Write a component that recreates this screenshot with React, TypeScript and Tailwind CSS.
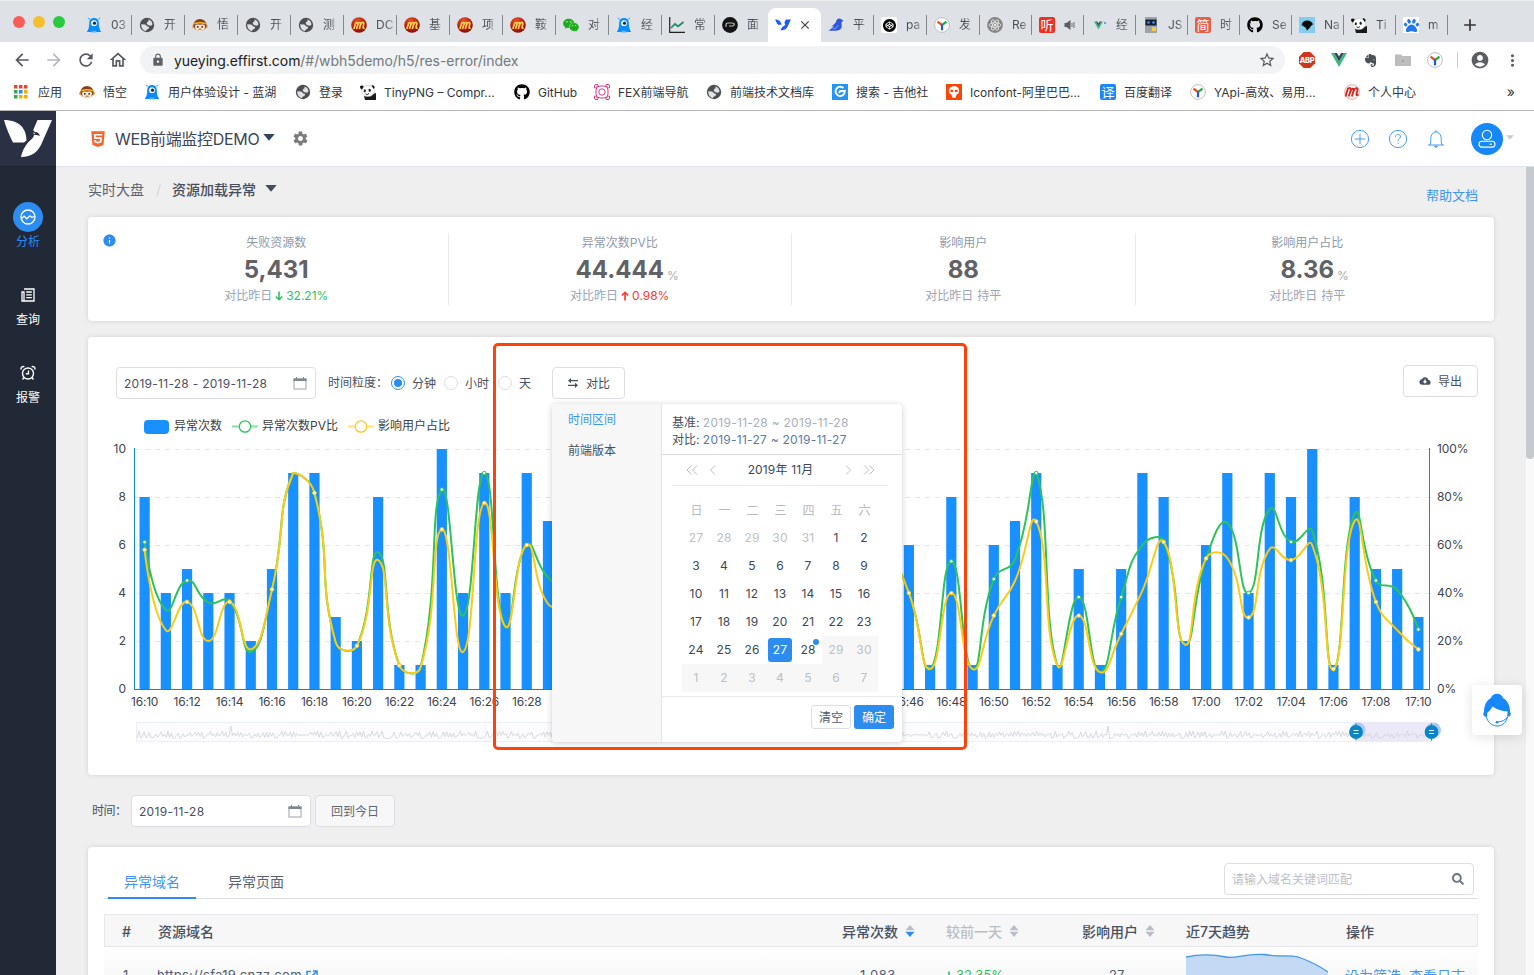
import React from "react";
import {
  MdArrowBack, MdArrowForward, MdRefresh, MdOutlineHome, MdLock, MdStarOutline,
  MdAccountCircle, MdMoreVert, MdAdd, MdClose,
} from "react-icons/md";
import { FaGithub, FaHtml5, FaEvernote, FaSearch, FaPaw } from "react-icons/fa";
import { AiFillWechat } from "react-icons/ai";
import { SiCodepen } from "react-icons/si";
import { IoMdSettings, IoMdCloudDownload, IoMdInformationCircle } from "react-icons/io";

type IconProps = { className?: string };

/* ---------- favicons ---------- */

const Globe = () => (
  <svg viewBox="0 0 16 16" className="size-4">
    <circle cx="8" cy="8" r="7.200" fill="#4d4f53" />
    <path d="M9.200 2.300L12.300 4l1.300 3.200-1.400 1.500-2.700-.4L7.800 7 8 5.200 9.800 4z" fill="#dfe1e4" />
    <path d="M2.200 7.300l4 .3 2.300 1.900 1.600.3-.5 2-2 .9-.8 1.500C4.300 13.500 2 11 2.200 7.300z" fill="#dfe1e4" />
  </svg>
);

const Lanhu = () => (
  <svg viewBox="0 0 16 16" className="size-4">
    <path d="M3.200 6C3.200 2.800 5.200 1 8 1s4.800 1.800 4.800 5c0 4 .6 6.500 2.400 9H.8C2.600 12.500 3.200 10 3.200 6z" fill="#0a8dfc" />
    <path d="M3.600 2.500L2.200.8M12.400 2.500L13.800.8" stroke="#0a8dfc" strokeWidth="1" />
    <circle cx="8" cy="6.200" r="2.900" fill="#fff" />
    <circle cx="8.500" cy="6.200" r="1.600" fill="#16264d" />
    <path d="M5 15.500l1.200-1.800h3.600L11 15.500z" fill="#57b6ff" />
  </svg>
);

const Monkey = () => (
  <svg viewBox="0 0 16 16" className="size-4">
    <circle cx="2" cy="9.500" r="1.900" fill="#e9a35c" />
    <circle cx="14" cy="9.500" r="1.900" fill="#e9a35c" />
    <ellipse cx="8" cy="8" rx="6.600" ry="6" fill="#8a3f16" />
    <path d="M3 9.500c0-2 2-2.300 5-1.800 3-.5 5-.2 5 1.800 0 3-2 4.500-5 4.500S3 12.500 3 9.500z" fill="#fbe9d2" />
    <path d="M2 6Q8 3.800 14 6L13.600 7.500Q8 5.600 2.400 7.500z" fill="#f5b92e" />
    <circle cx="5.800" cy="9.800" r=".9" fill="#2d1608" />
    <circle cx="10.200" cy="9.800" r=".9" fill="#2d1608" />
    <path d="M6.500 12.200h3" stroke="#8a3f16" strokeWidth=".8" />
  </svg>
);

const RedBall = () => (
  <svg viewBox="0 0 16 16" className="size-4">
    <defs>
      <radialGradient id="ball" cx=".4" cy=".25" r=".85">
        <stop offset="0" stopColor="#e8502a" />
        <stop offset=".6" stopColor="#b41c0c" />
        <stop offset="1" stopColor="#6d0d06" />
      </radialGradient>
    </defs>
    <circle cx="8" cy="8" r="7.800" fill="url(#ball)" />
    <path d="M2.800 12L4.800 6c2-1.200 2.700-.2 2 1.800L5.500 12M6.800 8C7.700 5 10.200 4.700 9.700 7L8.300 12M9.700 7.700c1-3 3.600-2.900 3.100-.7L12 10.500c0 1 .7.900 1.600.3" fill="none" stroke="#ffd257" strokeWidth="1.600" />
  </svg>
);

const Wechat = () => <AiFillWechat className="size-[18px] text-[#1cad19] -m-px" />;

const Trend = () => (
  <svg viewBox="0 0 16 16" className="size-4">
    <path d="M.7 0v15.300H16" fill="none" stroke="#222" strokeWidth="1.200" />
    <path d="M2 11l4-4 3 2.500L14.500 5" fill="none" stroke="#1c8a63" strokeWidth="1.700" />
  </svg>
);

const Interview = () => (
  <svg viewBox="0 0 16 16" className="size-4">
    <circle cx="8" cy="8" r="7.900" fill="#141414" />
    <path d="M4 10V8q0-2 2-2h4q2.300 0 2.300 1.300T10.500 9H7" fill="none" stroke="#bbb" strokeWidth="1.200" />
  </svg>
);

const BlueBird = () => (
  <svg viewBox="0 0 16 16" className="size-4">
    <path d="M.2 2.500c3.500 0 5.700 1.600 6.300 5.300H3C1.800 6.500 1 4.700.2 2.500z" fill="#1c5cf5" />
    <path d="M10.800 2.500h5.100L13 8.800C12 11.700 9.500 13.400 5.500 13.400c1-2.600 2.300-4.200 4-4.800 1.400-.6.600-2.200-.2-2.600z" fill="#1c5cf5" />
  </svg>
);

const Seagull = () => (
  <svg viewBox="0 0 16 16" className="size-4">
    <path d="M15.500 3.300l-2-.7C12.500.8 9 1 8.500 3.500 8 6 5.500 8 3.500 9.300L6 9.500.5 13.800H8c4 0 6.400-2.800 5.600-6.200-.3-1.500.1-3 1.900-4.300z" fill="#2f57d9" />
    <path d="M5 12q4-.4 5.500-4" stroke="#7f9dff" fill="none" />
  </svg>
);

const Codepen = () => (
  <span className="flex size-4 items-center justify-center bg-white rounded-[2px]">
    <SiCodepen className="size-[13px] text-black" />
  </span>
);

const YApi = () => (
  <svg viewBox="0 0 16 16" className="size-4">
    <circle cx="8" cy="8" r="7.400" fill="#fff" stroke="#b9b9b9" strokeWidth=".9" />
    <path d="M8 8L3.500 4.700" stroke="#f04a23" strokeWidth="2.200" />
    <path d="M8 8l4.500-3.300" stroke="#18b33a" strokeWidth="2.200" />
    <path d="M8 7.500v5.800" stroke="#2557e6" strokeWidth="2.200" />
  </svg>
);

const ReactGrey = () => (
  <svg viewBox="0 0 16 16" className="size-4">
    <circle cx="8" cy="8" r="7.900" fill="#858585" />
    <g fill="none" stroke="#eee" strokeWidth=".8">
      <ellipse cx="8" cy="8" rx="5.800" ry="2.300" />
      <ellipse cx="8" cy="8" rx="5.800" ry="2.300" transform="rotate(60 8 8)" />
      <ellipse cx="8" cy="8" rx="5.800" ry="2.300" transform="rotate(120 8 8)" />
    </g>
    <circle cx="8" cy="8" r="1.200" fill="#eee" />
  </svg>
);

const CharIcon = ({ char, className }: { char: string; className: string }) => (
  <span className={"flex size-4 items-center justify-center rounded-[2px] text-[13px] leading-none text-white " + className}>
    {char}
  </span>
);

const Speaker = () => (
  <svg viewBox="0 0 14 14" className="ml-[9px] mt-[-1px] size-[14px]" fill="#5a5d61">
    <path d="M.5 5v4h2L6.500 12V2L2.500 5z" />
    <path d="M8 5v4M10 4v6" stroke="#5a5d61" strokeWidth=".9" />
  </svg>
);

const VueLogo = ({ className = "size-4" }: IconProps) => (
  <svg viewBox="0 0 16 16" className={className}>
    <path d="M0 1h3.300L8 9.300 12.700 1H16L8 15z" fill="#41b883" />
    <path d="M3.200 1H6l2 3.500L10 1h2.800L8 9.500z" fill="#35495e" />
  </svg>
);

const VueTab = () => (
  <span className="flex size-4 items-center">
    <VueLogo className="ml-[3px] size-[9px]" />
    <span className="mb-1 ml-px size-[2px] rounded-full bg-[#2d8cf0]" />
  </span>
);

const Robot = () => (
  <svg viewBox="0 0 16 16" className="size-4">
    <rect x="2" width="12" height="16" fill="#9ea3a8" />
    <rect x="2.500" y="2.500" width="11" height="6" fill="#17202e" />
    <circle cx="5.500" cy="5.500" r="1.300" fill="#3d9cf2" />
    <circle cx="10.500" cy="5.500" r="1.300" fill="#3d9cf2" />
    <rect x="9" y="10" width="4" height="4" fill="#f2cd3c" />
  </svg>
);

const Nav = () => (
  <svg viewBox="0 0 16 16" className="size-4">
    <rect width="16" height="16" fill="#85cdf0" />
    <path d="M2.500 8C3 4.500 6 3 9 3.500c2.500.3 4 1.500 5 3.800L12 9l-1.500 2L8 13.500 6.500 10.500z" fill="#0b0b0b" />
  </svg>
);

const Panda = () => (
  <svg viewBox="0 0 16 16" className="size-4">
    <path d="M4 12c2 1 6 0 9-2l3-1v7H5z" fill="#1a1a1a" />
    <path d="M2 5.500C2.500 2.500 5 1.800 8.500 1.600 12 1.500 14.500 4 14.300 7.500 14 11 10.500 13 7.500 12.500 4 12 1.500 9 2 5.500z" fill="#fff" stroke="#999" strokeWidth=".4" />
    <path d="M0 2.300C1.200 1 3 1.300 3.700 2.500L2 5.500C.8 5.300 0 4 0 2.300zM11.500 1.500c1.500-.8 3.500.5 3 2.700l-1 .6z" fill="#111" />
    <ellipse cx="4.800" cy="6.800" rx="1.100" ry="1.500" fill="#222" transform="rotate(20 4.800 6.800)" />
    <ellipse cx="9.700" cy="6.300" rx="1.200" ry="1.500" fill="#222" transform="rotate(-30 9.700 6.300)" />
    <path d="M5.500 9.800l1.800.9 1.700-1.200" stroke="#222" strokeWidth="1" fill="none" />
  </svg>
);

const Baidu = () => (
  <span className="flex size-4 items-center justify-center bg-white">
    <FaPaw className="size-[15px] text-[#2277ee]" />
  </span>
);

const Fex = () => (
  <svg viewBox="0 0 16 16" className="size-4">
    <g fill="none" stroke="#d83c8c" strokeWidth="1">
      <rect x="2" y="2" width="12" height="12" rx="4" />
      <circle cx="8" cy="8" r="3.200" />
      <path d="M.5 4V2A1.500 1.500 0 0 1 2 .5h2M12 .5h2A1.500 1.500 0 0 1 15.500 2v2M.5 12v2A1.500 1.500 0 0 0 2 15.500h2M12 15.500h2a1.500 1.500 0 0 0 1.500-1.500v-2" />
      <path d="M1 4.500L4.500 1M11.500 1L15 4.500M1 11.500L4.500 15M11.500 15l3.500-3.500" />
    </g>
  </svg>
);

const Guitar = () => (
  <svg viewBox="0 0 16 16" className="size-4">
    <rect width="16" height="16" fill="#2196f3" />
    <path d="M11.500 4.200A4.600 4.600 0 1 0 12.300 9.500L12.800 7H8.200L7 9" fill="none" stroke="#fff" strokeWidth="1.900" />
  </svg>
);

const Iconfont = () => (
  <svg viewBox="0 0 16 16" className="size-4">
    <rect width="16" height="16" fill="#fc4506" />
    <path d="M8 2.200c3.200 0 5.200 2 5.200 4.500 0 2-1.200 3.300-2.700 4L9.500 13.800h-3l-1-3.100C4 10 2.800 8.700 2.800 6.700c0-2.500 2-4.500 5.200-4.500z" fill="#fff" />
    <ellipse cx="5.800" cy="7" rx="1.500" ry="1.300" fill="#fc4506" />
    <ellipse cx="10.200" cy="7" rx="1.500" ry="1.300" fill="#fc4506" />
  </svg>
);

const PersonalCenter = () => (
  <svg viewBox="0 0 16 16" className="size-4">
    <circle cx="8" cy="8" r="7.300" fill="#fff" stroke="#e39a94" strokeWidth=".9" />
    <path d="M1.500 12.500l2.500-8c2.300-1.300 3.300-.2 2.400 2.500L4.800 12.500M6.400 8C7.500 4 10.100 3.600 9.600 6.500L7.900 12.500M9.800 7c1.200-3.800 4.200-3.600 3.600-.6l-1 4c0 1.100.8.9 2.100.1" fill="none" stroke="#d3291f" strokeWidth="1.900" />
  </svg>
);

const AppsGrid = () => {
  const colors = ["#ea4335", "#ea4335", "#ea4335", "#34a853", "#1a8cff", "#f9ab00", "#34a853", "#f9ab00", "#f9ab00"];
  return (
    <svg viewBox="0 0 14 14" className="size-[14px]">
      {colors.map((c, i) => (
        <rect key={i} x={(i % 3) * 5} y={Math.floor(i / 3) * 5} width="3.500" height="3.500" fill={c} />
      ))}
    </svg>
  );
};

/* ---------- browser chrome ---------- */

const tabsBefore: [React.ReactNode, string][] = [
  [<Lanhu />, "03"], [<Globe />, "开"], [<Monkey />, "悟"], [<Globe />, "开"], [<Globe />, "测"],
  [<RedBall />, "DC"], [<RedBall />, "基"], [<RedBall />, "项"], [<RedBall />, "鞍"], [<Wechat />, "对"],
  [<Lanhu />, "经"], [<Trend />, "常"], [<Interview />, "面"],
];
const tabsAfter: [React.ReactNode, string][] = [
  [<Seagull />, "平"], [<Codepen />, "pa"], [<YApi />, "发"],
];
const tabsNarrow: [React.ReactNode, React.ReactNode][] = [
  [<ReactGrey />, "Re"],
  [<CharIcon char="听" className="bg-[#ee3024]" />, null],
  [<VueTab />, "经"], [<Robot />, "JS"],
  [<CharIcon char="简" className="bg-[#e4604c]" />, "时"],
  [<FaGithub className="size-4 text-black" />, "Se"], [<Nav />, "Na"], [<Panda />, "Ti"], [<Baidu />, "m"],
];

const tabText =
  "ml-[9px] whitespace-nowrap bg-gradient-to-r from-[#4b4f54] from-60% to-[#a5a8ad] bg-clip-text text-[12px] leading-[18px] text-transparent";

function TabStrip() {
  return (
    <div className="flex h-[42px] shrink-0 items-end border-t border-[#eceef0] bg-[#dee1e6]">
      <div className="flex h-full w-[79px] items-center gap-2 pl-[13px]">
        <span className="size-3 rounded-full bg-[#fc5b57]" />
        <span className="size-3 rounded-full bg-[#f5be2e]" />
        <span className="size-3 rounded-full bg-[#28ca42]" />
      </div>
      {tabsBefore.map(([icon, text], i) => (
        <div key={i} className="flex h-[34px] w-[53px] items-center pl-[7px]">
          {icon}
          <span className={tabText}>{text}</span>
          <span className={i === 12 ? "hidden" : "ml-auto h-5 w-px bg-[#85888d]"} />
        </div>
      ))}
      <div className="flex h-[34px] w-[53px] items-center rounded-t-lg bg-white pl-[7px]">
        <BlueBird />
        <MdClose className="ml-[7px] size-[14px] text-[#3c4043]" />
      </div>
      {tabsAfter.map(([icon, text], i) => (
        <div key={i} className="flex h-[34px] w-[53px] items-center pl-[7px]">
          {icon}
          <span className={tabText}>{text}</span>
          <span className="ml-auto h-5 w-px bg-[#85888d]" />
        </div>
      ))}
      {tabsNarrow.map(([icon, text], i) => (
        <div key={i} className="flex h-[34px] w-[52px] items-center pl-[7px]">
          {icon}
          {text ? <span className={tabText}>{text}</span> : <Speaker />}
          <span className="ml-auto h-5 w-px bg-[#85888d]" />
        </div>
      ))}
      <div className="flex h-[34px] items-center pl-3">
        <MdAdd className="size-5 text-[#333]" />
      </div>
    </div>
  );
}

function Toolbar() {
  return (
    <div className="flex h-9 shrink-0 items-center bg-white pl-3">
      <MdArrowBack className="size-5 text-[#55585c]" />
      <MdArrowForward className="ml-3 size-5 text-[#b5b7ba]" />
      <MdRefresh className="ml-3 size-5 text-[#55585c]" />
      <MdOutlineHome className="ml-3 size-5 text-[#55585c]" />
      <div className="ml-3 flex h-7 w-[1145px] items-center rounded-full bg-[#f1f3f4] pl-[11px] pr-[9px]">
        <MdLock className="size-[14px] text-[#5f6368]" />
        <span className="ml-[9px] whitespace-nowrap text-[14px] tracking-[-0.060px] text-[#202124]">yueying.effirst.com<span className="text-[#75797e]">/#/wbh5demo/h5/res-error/index</span></span>
        <MdStarOutline className="ml-auto size-[18px] text-[#55585c]" />
      </div>
      <svg viewBox="0 0 16 16" className="ml-[14px] size-4">
        <path d="M4.700 0h6.600L16 4.700v6.600L11.300 16H4.700L0 11.300V4.700z" fill="#d1351b" />
        <text x="8" y="10.800" textAnchor="middle" fontSize="7.400" fontWeight="800" letterSpacing="-0.300" fill="#fff">ABP</text>
      </svg>
      <VueLogo className="ml-4 size-4" />
      <FaEvernote className="ml-4 size-[15px] text-[#4a5057]" />
      <svg viewBox="0 0 16 14" className="ml-[17px] h-[14px] w-4">
        <path d="M0 1.500h6l1.500 1.500H16V13H0z" fill="#bcbcbc" />
        <circle cx="8" cy="7.800" r="2.800" fill="#b0b0b0" stroke="#cdcdcd" strokeWidth=".8" />
      </svg>
      <span className="ml-4"><YApi /></span>
      <span className="ml-[14px] h-4 w-px bg-[#c9cbce]" />
      <MdAccountCircle className="ml-3 size-5 text-[#5b5e62]" />
      <MdMoreVert className="ml-[13px] size-[19px] text-[#5b5e62]" />
    </div>
  );
}

const bookmarks: { icon: React.ReactNode; label: string; cls: string }[] = [
  { icon: <AppsGrid />, label: "应用", cls: "w-[65px] gap-[10px]" },
  { icon: <Monkey />, label: "悟空", cls: "w-[65px] gap-2" },
  { icon: <Lanhu />, label: "用户体验设计 - 蓝湖", cls: "w-[151px] gap-2" },
  { icon: <Globe />, label: "登录", cls: "w-[65px] gap-2" },
  { icon: <Panda />, label: "TinyPNG – Compr...", cls: "w-[154px] gap-2" },
  { icon: <FaGithub className="size-4 text-black" />, label: "GitHub", cls: "w-[80px] gap-2" },
  { icon: <Fex />, label: "FEX前端导航", cls: "w-[112px] gap-2" },
  { icon: <Globe />, label: "前端技术文档库", cls: "w-[126px] gap-2" },
  { icon: <Guitar />, label: "搜索 - 吉他社", cls: "w-[114px] gap-2" },
  { icon: <Iconfont />, label: "Iconfont-阿里巴巴...", cls: "w-[154px] gap-2" },
  { icon: <CharIcon char="译" className="bg-[#1989fa]" />, label: "百度翻译", cls: "w-[90px] gap-2" },
  { icon: <YApi />, label: "YApi-高效、易用...", cls: "w-[154px] gap-2" },
  { icon: <PersonalCenter />, label: "个人中心", cls: "w-[90px] gap-2" },
];

function Bookmarks() {
  return (
    <div className="flex h-[33px] shrink-0 items-center border-b border-[#b5b5b5] bg-white pb-1 pl-[14px] text-[12px] text-[#33363a]">
      {bookmarks.map((b) => (
        <div key={b.label} className={"flex shrink-0 items-center whitespace-nowrap " + b.cls}>
          <span className="shrink-0">{b.icon}</span>
          <span className="pt-px">{b.label}</span>
        </div>
      ))}
      <span className="ml-auto pr-[19px] text-[14px] leading-none">»</span>
    </div>
  );
}

/* ---------- app shell ---------- */

function Sidebar() {
  return (
    <div className="flex w-14 shrink-0 flex-col items-center bg-[#212936] text-[12px]">
      <div className="h-14 w-14 shrink-0 border-b border-[#1c2230] bg-[#2b3144]">
        <svg viewBox="0 0 56 56" className="size-14">
          <path d="M4 9c12 .2 22 5 22.500 20.500L24 31.500H13C9 24 6 16 4 9z" fill="#fff" />
          <path d="M37.500 9H52L42.500 30.500C38.500 41 32 46 21 46c1.500-7 5-12.500 8-15.500 2-2 5-4 5-6.500L33 19.500z" fill="#fff" />
          <path d="M33 19l1.800 2c2.700-.3 4.700 1.500 5.200 4-2.200-1.300-5.500-1-7-1l2.300-1.300L33 21z" fill="#2b3144" />
        </svg>
      </div>
      <div className="mt-[35px] flex size-[30px] items-center justify-center rounded-full bg-[#2d8cf0]">
        <svg viewBox="0 0 16 16" className="size-4" fill="none" stroke="#fff" strokeWidth="1.300">
          <circle cx="8" cy="8" r="7" />
          <path d="M1.500 9.500l2.700-2.300 2.500 2.600 3.300-3 2 1.700L14.500 7" />
        </svg>
      </div>
      <span className="mt-[2px] leading-4 text-[#2d8cf0]">分析</span>
      <svg viewBox="0 0 14 14" className="mt-[38px] size-[14px]" fill="none" stroke="#fff" strokeWidth="1.300">
        <path d="M3 1h10v12H1V4h2v9" />
        <path d="M5.200 4h5.600M5.200 6.800h5.600M5.200 9.700h5.600" />
      </svg>
      <span className="mt-[10px] leading-4 text-white">查询</span>
      <svg viewBox="0 0 16 16" className="mt-[37px] size-4" fill="none" stroke="#fff" strokeWidth="1.400">
        <circle cx="8" cy="8.500" r="5.500" />
        <path d="M8.500 5.500v3.300H5.800M1.300 4.500a2 2 0 0 1 3-2.500M14.700 4.500a2 2 0 0 0-3-2.500M4 12.500l-1.500 2M12 12.500l1.500 2" />
      </svg>
      <span className="mt-[9px] leading-4 text-white">报警</span>
    </div>
  );
}

const Triangle = ({ className = "h-[7px] w-3" }: IconProps) => (
  <svg viewBox="0 0 12 7" className={className}>
    <path d="M.3 0h11.400L6 6.800z" fill="currentColor" />
  </svg>
);

function Header() {
  return (
    <div className="flex h-14 shrink-0 items-center border-b border-[#dde3ec] bg-white pl-[33px] pr-5">
      <FaHtml5 className="size-[18px] text-[#f9642d]" />
      <span className="ml-2 w-[145px] whitespace-nowrap text-[16px] tracking-[-0.300px] text-[#3b4658]">WEB前端监控DEMO</span>
      <Triangle className="ml-[3px] -mt-[3px] h-[7px] w-3 text-[#33465c]" />
      <IoMdSettings className="ml-[17px] size-[17px] text-[#7c7c7c]" />
      <svg viewBox="0 0 20 20" className="ml-auto size-5" fill="none" stroke="#4a9bf5">
        <circle cx="10" cy="10" r="8.600" />
        <path d="M10 4.800v10.400M4.800 10h10.400" />
      </svg>
      <svg viewBox="0 0 20 20" className="ml-[18px] size-5" fill="none" stroke="#4a9bf5">
        <circle cx="10" cy="10" r="8.600" />
        <path d="M7.500 8.200C7.300 4.400 12.700 4.600 12.500 7.800 12.400 9.700 10 9.800 10 12M10 13.500v1.300" />
      </svg>
      <svg viewBox="0 0 20 20" className="ml-[18px] size-5" fill="none" stroke="#4a9bf5">
        <path d="M2 16h16M4 16c.6-1 .8-3 .8-6C4.800 6 6.800 3 10 3s5.200 3 5.200 7c0 3 .2 5 .8 6M8.700 2.800L10 1.500l1.300 1.300" />
        <path d="M8.300 17.200h3.400L10 18.500z" fill="#4a9bf5" />
      </svg>
      <div className="ml-[25px] flex size-8 items-center justify-center rounded-full bg-[#1788fb]">
        <svg viewBox="0 0 18 20" className="h-5 w-[18px]" fill="none" stroke="#fff" strokeWidth="1.100">
          <circle cx="9" cy="6" r="4.700" />
          <rect x="1" y="12.300" width="16" height="5.800" rx="2.900" />
          <path d="M11.500 15.200h2.500" />
        </svg>
      </div>
      <Triangle className="ml-[3px] -mt-[2px] h-[5px] w-2 text-[#c9ccd1]" />
    </div>
  );
}

/* ---------- summary ---------- */

const stats = [
  { label: "失败资源数", value: "5,431", unit: "", diff: "32.21%", dir: "down" },
  { label: "异常次数PV比", value: "44.444", unit: "%", diff: "0.98%", dir: "up" },
  { label: "影响用户", value: "88", unit: "", diff: "持平", dir: "" },
  { label: "影响用户占比", value: "8.36", unit: "%", diff: "持平", dir: "" },
];

const Arrow = ({ dir }: { dir: string }) => (
  <svg viewBox="0 0 8 10" className="mx-[3px] h-[10px] w-2" fill="none" stroke="currentColor" strokeWidth="1.600">
    {dir === "down" ? <path d="M4 .5v8M.8 5.500L4 8.700l3.200-3.200" /> : <path d="M4 9.500v-8M.8 4.500L4 1.300l3.200 3.200" />}
  </svg>
);

function Summary() {
  return (
    <div className="relative grid h-[104px] shrink-0 grid-cols-4 rounded bg-white py-4 pl-[17px] pr-[15px] shadow-[0_0_5px_rgba(0,0,0,0.120)]">
      <IoMdInformationCircle className="absolute left-[14px] top-[16px] size-[15px] text-[#2d8cf0]" />
      {stats.map((s, i) => (
        <div key={s.label} className={"flex flex-col items-center " + (i < 3 ? "border-r border-[#e8eaee]" : "")}>
          <span className="mt-px text-[12px] leading-[18px] text-[#8e99aa]">{s.label}</span>
          <span className="relative mt-[2px] text-[24px] font-bold leading-[32px] text-[#606266]">
            {s.value}
            {s.unit && <span className="absolute bottom-0 left-full ml-[3px] text-[12px] font-normal leading-[20px] text-[#a6abb3]">%</span>}
          </span>
          <span className="mt-[1px] flex items-center text-[12px] leading-[18px] text-[#9aa5b5]">
            对比昨日
            {s.dir === "" ? <span className="ml-1">持平</span> : (
              <span className={"flex items-center " + (s.dir === "down" ? "text-[#2bc35a]" : "text-[#f5382c]")}>
                <Arrow dir={s.dir} />{s.diff}
              </span>
            )}
          </span>
        </div>
      ))}
    </div>
  );
}

/* ---------- chart ---------- */

const bars = [
  8, 4, 5, 4, 4, 2, 5, 9, 9, 3, 2, 8, 1, 1, 10, 4, 9, 4, 9, 7,
  6, 4, 5, 3, 6, 7, 2, 5, 8, 3, 4, 6, 5, 7, 3, 6,
  6, 1, 8, 1, 6, 7, 9, 1, 5, 1, 5, 9, 8, 2, 6, 9, 4, 9, 8, 10, 1, 8, 5, 5, 3,
];
const pvRatio = [
  61.2, 33, 45.2, 36, 36.5, 15.5, 41.5, 90, 81.7, 19.5, 18, 57, 9.8, 9, 83.1, 30.5, 90, 26, 60, 46.5,
  42, 40, 42, 35, 40, 50, 30, 40, 50, 30, 40, 45, 40, 50, 50, 54,
  40, 8.3, 53.2, 8.3, 45.8, 54, 90, 9.7, 38.3, 7, 38.3, 60, 61.3, 18.5, 54.4, 69.2, 40, 75, 61.3, 66, 8.3, 73, 45.2, 41.3, 24.8,
];
const userRatio = [
  58, 24.5, 36.3, 20, 36.3, 16.5, 41.5, 90, 81.7, 19.5, 18, 53.7, 9.8, 9, 66.5, 15.4, 77.5, 26, 60, 35.5,
  36, 36, 38, 30, 36, 46, 26, 36, 46, 26, 36, 40, 36, 46, 50, 54,
  40, 8.3, 40, 8.3, 30.6, 45, 69.8, 9.7, 30.6, 7, 23, 41, 61.3, 18.5, 54.4, 54.6, 29.8, 58.4, 53.7, 60, 8.3, 70, 36.3, 24.5, 16.5,
];

const STEP = 1295 / 61;
const BASE = 689;
const px = (i: number) => 134 + STEP * (i + 0.5);
const py = (v: number) => BASE - v * 2.4;

function smoothPath(values: number[]) {
  const p = values.map((v, i) => [px(i), py(v)]);
  let d = `M${p[0][0]} ${p[0][1]}`;
  let cx = p[0][0];
  let cy = p[0][1];
  for (let i = 1; i < p.length; i++) {
    const [x, y] = p[i];
    let c1x = x, c1y = y, nx = x, ny = y;
    if (i < p.length - 1) {
      const dPrev = Math.hypot(x - p[i - 1][0], y - p[i - 1][1]);
      const dNext = Math.hypot(p[i + 1][0] - x, p[i + 1][1] - y);
      const r = dNext / (dPrev + dNext);
      const vx = p[i + 1][0] - p[i - 1][0];
      const vy = p[i + 1][1] - p[i - 1][1];
      c1x = x - vx * 0.5 * (1 - r);
      c1y = Math.max(473, y - vy * 0.5 * (1 - r));
      nx = x + vx * 0.5 * r;
      ny = Math.max(473, y + vy * 0.5 * r);
    }
    d += `C${cx.toFixed(1)} ${cy.toFixed(1)} ${c1x.toFixed(1)} ${c1y.toFixed(1)} ${x.toFixed(1)} ${y.toFixed(1)}`;
    cx = nx;
    cy = ny;
  }
  return d;
}

function overviewPath() {
  let seed = 7;
  let d = "M137 738";
  let up = true;
  for (let x = 139; x < 1431; x += 1.7) {
    seed = (seed * 16807) % 2147483647;
    const r = seed / 2147483647;
    const spike = Math.abs(x - 230.5) < 0.9 || Math.abs(x - 1108) < 0.9;
    const y = up ? 731 + r * 4.5 : 735 + r * 3.5;
    d += `L${x.toFixed(1)} ${spike ? 726 : y.toFixed(1)}`;
    if (r < 0.72) up = !up;
  }
  return d;
}

const timeLabel = (i: number) => {
  const m = 970 + i;
  return `${Math.floor(m / 60)}:${String(m % 60).padStart(2, "0")}`;
};

const Handle = ({ x }: { x: number }) => (
  <g>
    <circle cx={x + 2} cy="730" r="7.500" fill="#a9ccf5" />
    <path d={`M${x} 723.500v17`} stroke="#0a86c7" />
    <circle cx={x} cy="732" r="6.900" fill="#0a86c7" />
    <path d={`M${x - 2.5} 730.500h5M${x - 2.5} 733.500h5`} stroke="#fff" strokeWidth=".9" />
  </g>
);

function Chart() {
  return (
    <svg viewBox="88 436 1406 339" className="block h-[339px] w-[1406px]" fontSize="12" fill="#40454d">
      {[0, 1, 2, 3, 4].map((k) => (
        <path key={k} d={`M135 ${449.5 + 48 * k}H1429`} stroke="#e6e6e6" strokeDasharray="5 5" />
      ))}
      {bars.map((v, i) => (
        <rect key={i} x={px(i) - 5.1} y={BASE - v * 24} width="10.200" height={v * 24} fill="#1890ff" />
      ))}
      <path d="M134.500 448v242M1429.500 448v242M134 689.500h1296" stroke="#1089cb" fill="none" />
      <path d={smoothPath(pvRatio)} fill="none" stroke="#2bc35a" strokeWidth="2" />
      {pvRatio.map((v, i) => i % 2 === 0 && <circle key={i} cx={px(i)} cy={py(v)} r="1.800" fill="#fff" stroke="#2bc35a" />)}
      <path d={smoothPath(userRatio)} fill="none" stroke="#facc14" strokeWidth="2" />
      {userRatio.map((v, i) => i % 2 === 0 && <circle key={i} cx={px(i)} cy={py(v)} r="1.800" fill="#fff" stroke="#facc14" />)}
      {[0, 2, 4, 6, 8, 10].map((v) => (
        <g key={v}>
          <text x="126" y={692.5 - v * 24} textAnchor="end">{v}</text>
          <text x="1437" y={692.5 - v * 24} letterSpacing="-0.080">{v * 10}%</text>
        </g>
      ))}
      {bars.map((_, i) => i % 2 === 0 && (
        <text key={i} x={px(i)} y="706" textAnchor="middle" letterSpacing="-0.200">{timeLabel(i)}</text>
      ))}
      <rect x="136.500" y="722.500" width="1295" height="19" fill="#fcfcff" stroke="#e8eefb" />
      <rect x="1356" y="722" width="76" height="20" fill="#ebe9f7" />
      <path d={overviewPath()} fill="none" stroke="#d3d5db" strokeWidth=".9" />
      <Handle x={1356} />
      <Handle x={1431.5} />
    </svg>
  );
}

const CalendarIcon = () => (
  <svg viewBox="0 0 14 13" className="h-[13px] w-[14px]" fill="none">
    <rect x="1" y="2" width="12" height="10" stroke="#9aa0ab" />
    <path d="M.5 1.500h13v2.500H.5z" fill="#7f8690" />
    <path d="M3.500 0v2M10.500 0v2" stroke="#7f8690" />
  </svg>
);

const Radio = ({ on = false }: { on?: boolean }) =>
  on ? (
    <span className="flex size-[14px] items-center justify-center rounded-full border border-[#2d8cf0]">
      <span className="size-2 rounded-full bg-[#2d8cf0]" />
    </span>
  ) : (
    <span className="size-[14px] rounded-full border border-[#dcdee2]" />
  );

const LegendLine = ({ color }: { color: string }) => (
  <svg viewBox="0 0 26 14" className="h-[14px] w-[26px]">
    <path d="M0 7.500h26" stroke={color} strokeWidth="2" opacity=".55" />
    <circle cx="13" cy="7.500" r="5.700" fill="#fff" stroke={color} strokeWidth="1.200" />
  </svg>
);

const Chevron = ({ d }: { d: string }) => (
  <svg viewBox="0 0 12 10" className="h-[10px] w-3" fill="none" stroke="#b8bdc6"><path d={d} /></svg>
);

const days = [27, 28, 29, 30, 31, ...Array.from({ length: 30 }, (_, i) => i + 1), 1, 2, 3, 4, 5, 6, 7];

function ComparePopup() {
  return (
    <div className="absolute left-0 top-[37px] z-10 flex h-[338px] w-[350px] overflow-hidden rounded bg-white text-[12px] shadow-[0_1px_6px_rgba(0,0,0,0.200)]">
      <div className="flex w-[110px] shrink-0 flex-col border-r border-[#e3e5e8] bg-[#f7f7f7] pl-4 pt-[7px] text-[#495060]">
        <span className="leading-[18px] text-[#3f95f2]">时间区间</span>
        <span className="mt-[13px] leading-[18px]">前端版本</span>
      </div>
      <div className="flex flex-1 flex-col">
        <div className="h-[51px] shrink-0 whitespace-nowrap border-b border-[#d9dbdf] pl-[10px] pt-[10px] leading-[17px] text-[#495060]">
          <div>基准: <span className="tracking-[0.280px] text-[#a9afba]">2019-11-28 ~ 2019-11-28</span></div>
          <div>对比: <span className="tracking-[0.250px] text-[#5b7ba3]">2019-11-27 ~ 2019-11-27</span></div>
        </div>
        <div className="ml-[10px] mr-[14px] flex h-[31px] shrink-0 items-center border-b border-[#e8eaec] pl-[14px] pr-[13px]">
          <Chevron d="M5.500.5L1 5l4.500 4.500M11 .5L6.500 5l4.500 4.500" />
          <span className="ml-[10px]"><Chevron d="M7 .5L2.500 5 7 9.500" /></span>
          <span className="flex-1 text-center tracking-[0.150px] text-[#3d4757]">2019年 11月</span>
          <Chevron d="M5 .5L9.500 5 5 9.500" />
          <span className="ml-[10px]"><Chevron d="M1 .5L5.500 5 1 9.500M6.500.5L11 5l-4.500 4.500" /></span>
        </div>
        <div className="ml-5 mt-[10px] grid w-[196px] shrink-0 grid-cols-7">
          {["日", "一", "二", "三", "四", "五", "六"].map((w) => (
            <span key={w} className="flex h-7 items-center justify-center pl-px pt-px text-[#b6bac2]">{w}</span>
          ))}
          {days.map((n, i) => {
            const disabled = i > 32;
            const selected = i === 31;
            const muted = i < 5 || disabled;
            return (
              <span key={i} className={"relative flex h-7 items-center justify-center tracking-[0.200px] " + (disabled ? "bg-[#f7f7f7] " : "") + (muted ? "text-[#bcc0c8]" : "text-[#3d4757]")}>
                {selected ? <span className="flex size-6 items-center justify-center rounded-[3px] bg-[#2d8cf0] text-white">{n}</span> : n}
                {i === 32 && <span className="absolute right-[3px] top-[3px] size-[6px] rounded-full bg-[#2d8cf0]" />}
              </span>
            );
          })}
        </div>
        <div className="mt-1 flex flex-1 items-start justify-end gap-[3px] border-t border-[#e8eaec] pr-2 pt-2">
          <span className="flex h-6 w-10 items-center justify-center rounded-[3px] border border-[#dcdee2] pt-px text-[#515a6e]">清空</span>
          <span className="flex h-6 w-10 items-center justify-center rounded-[3px] bg-[#2d8cf0] pt-px text-white">确定</span>
        </div>
      </div>
    </div>
  );
}

function ChartCard() {
  return (
    <div className="relative mt-4 flex h-[438px] shrink-0 flex-col rounded bg-white shadow-[0_0_5px_rgba(0,0,0,0.120)]">
      <div className="mt-[30px] flex h-8 shrink-0 items-center pl-7 pr-4 text-[12px] text-[#495060]">
        <div className="flex h-8 w-[200px] items-center justify-between rounded border border-[#dcdee2] pl-[7px] pr-[8px]">
          <span className="whitespace-nowrap pt-px tracking-[0.270px]">2019-11-28 - 2019-11-28</span>
          <CalendarIcon />
        </div>
        <span className="ml-3 w-[63px] whitespace-nowrap">时间粒度：</span>
        <Radio on />
        <span className="ml-[7px] w-[32px] pt-px">分钟</span>
        <Radio />
        <span className="ml-[7px] w-[33px] pt-px">小时</span>
        <Radio />
        <span className="ml-[7px] w-[33px] pt-px">天</span>
        <div className="relative">
          <div className="flex h-8 w-[73px] items-center rounded border border-[#dcdee2] pl-[15px]">
            <svg viewBox="0 0 10 10" className="mr-2 size-[10px]" fill="#495060">
              <path d="M3 0v2h7v1.300H3v2L0 2.650zM7 4.700v2H0V8h7v2l3-2.650z" />
            </svg>
            <span className="pt-px">对比</span>
          </div>
          <ComparePopup />
        </div>
        <div className="ml-auto -mt-1 flex h-8 w-[75px] items-center rounded border border-[#dcdee2] pl-[15px]">
          <IoMdCloudDownload className="mr-[7px] size-3" />
          <span className="pt-px">导出</span>
        </div>
      </div>
      <div className="mt-[17px] flex h-5 shrink-0 items-center pl-14 text-[12px] text-[#404040]">
        <span className="mt-px h-[14px] w-[25px] rounded bg-[#1890ff]" />
        <span className="ml-[5px] w-[58px]">异常次数</span>
        <LegendLine color="#2bc35a" />
        <span className="ml-1 w-[86px] whitespace-nowrap">异常次数PV比</span>
        <LegendLine color="#facc14" />
        <span className="ml-1">影响用户占比</span>
      </div>
      <Chart />
      <div className="absolute left-[405px] top-[6px] z-20 h-[407px] w-[474px] rounded-[5px] border-[3px] border-[#ff4208]" />
    </div>
  );
}

/* ---------- table ---------- */

const Sort = ({ active = false }: { active?: boolean }) => (
  <svg viewBox="0 0 10 12" className="-mt-[2px] ml-[7px] h-3 w-[10px]">
    <path d="M5 0l4.500 5.300H.5z" fill="#b9bdc6" />
    <path d="M5 12l4.500-5.300H.5z" fill={active ? "#2d8cf0" : "#b9bdc6"} />
  </svg>
);

function TableCard() {
  return (
    <div className="mt-5 flex h-[200px] shrink-0 flex-col rounded-t bg-white px-4 shadow-[0_0_5px_rgba(0,0,0,0.120)]">
      <div className="flex h-[52px] shrink-0 border-b border-[#dcdee2] pl-1 text-[14px]">
        <span className="-mb-px flex h-[52px] w-[88px] items-center justify-center border-b-2 border-[#2d8cf0] pt-[19px] text-[#3f95f2]">异常域名</span>
        <span className="ml-4 flex h-[52px] w-[88px] items-center justify-center pt-[17px] text-[#5a6270]">异常页面</span>
        <div className="ml-auto mr-1 mt-4 flex h-8 w-[250px] items-center justify-between rounded border border-[#dcdee2] pl-[7px] pr-[9px] text-[12px] text-[#bcc0c8]">
          <span className="pt-[2px]">请输入域名关键词匹配</span>
          <FaSearch className="size-[12px] text-[#6f7683]" />
        </div>
      </div>
      <div className="mt-[15px] flex h-[33px] shrink-0 items-center border border-[#e6e8ec] bg-[#f7f7f7] pt-[2px] text-[14px] font-medium text-[#495060]">
        <span className="w-[53px] pl-[17px]">#</span>
        <span className="w-[684px]">资源域名</span>
        <span className="flex w-[104px] items-center">异常次数<Sort active /></span>
        <span className="flex w-[136px] items-center text-[#b9bdc6]">较前一天<Sort /></span>
        <span className="flex w-[104px] items-center">影响用户<Sort /></span>
        <span className="w-[160px]">近7天趋势</span>
        <span>操作</span>
      </div>
      <div className="flex h-[57px] shrink-0 items-center bg-gradient-to-b from-white via-[#f7f8f8] to-[#ebeced] text-[13px] text-[#515a6e]">
        <span className="w-[53px] pl-[19px]">1</span>
        <span className="flex w-[660px] items-center whitespace-nowrap">
          <span className="tracking-[0.280px]">https://sfa19.cnzz.com</span>
          <svg viewBox="0 0 12 12" className="ml-1 size-3" fill="none" stroke="#2d8cf0" strokeWidth="1.500">
            <path d="M5 1.500H1v9.500h9.500V7M7 1h4v4M11 1L5.500 6.500" />
          </svg>
        </span>
        <span className="w-[79px] text-right tracking-[0.600px]">1,083</span>
        <span className="ml-[48px] flex w-[110px] items-center whitespace-nowrap text-[#2bc35a]"><span className="-ml-[2px]"><Arrow dir="down" /></span>32.35%</span>
        <span className="ml-[55px] w-[77px]">27</span>
        <svg viewBox="0 0 142 50" className="h-[50px] w-[142px]">
          <path d="M0 6C14 3 26 3 40 6 50 8 60 2 78 3.500 92 6 104 4 112 6 124 10 132 14 142 21V50H0z" fill="#c3d9f4" />
          <path d="M0 6C14 3 26 3 40 6 50 8 60 2 78 3.500 92 6 104 4 112 6 124 10 132 14 142 21" fill="none" stroke="#4198f2" strokeWidth="1.300" />
        </svg>
        <span className="ml-[17px] flex gap-2 whitespace-nowrap text-[14px] text-[#3f95f2]"><span>设为筛选</span><span>查看日志</span></span>
      </div>
    </div>
  );
}

function Support() {
  return (
    <div className="absolute left-[1472px] top-[685px] z-30 flex size-[50px] items-center justify-center rounded bg-white shadow-[0_2px_12px_rgba(0,0,0,0.120)]">
      <svg viewBox="0 0 28 34" className="h-[34px] w-7">
        <path d="M8 5C8.500 2.500 11 .8 14 .8S19.500 2.500 20 5C24.500 7.500 27 12 27 19c1 1 1 3-.5 4.500H24L4 23.500H1.500C0 22 0 20 1 19 1 12 3.500 7.500 8 5z" fill="#1788fb" />
        <path d="M4 20c2-1.500 4.500-4 5.500-6.500 4 3 9.500 4.500 15 5 .5 7-4 13-10.500 13C8 31.500 3.800 26.500 4 20z" fill="#fff" />
        <path d="M3 23c1.500 6 6 10 11 10s9-3 10.500-9c-2 3-5 4.500-10 5" fill="none" stroke="#1788fb" />
        <circle cx="14" cy="29.200" r="1.300" fill="#1788fb" />
      </svg>
    </div>
  );
}

export default function App() {
  return (
    <div className="relative flex h-[975px] w-[1534px] flex-col overflow-hidden bg-white font-['Inter','Noto_Sans_CJK_SC',sans-serif]">
      <TabStrip />
      <Toolbar />
      <Bookmarks />
      <div className="flex min-h-0 flex-1">
        <Sidebar />
        <div className="flex min-w-0 flex-1 flex-col">
          <Header />
          <div className="flex min-h-0 flex-1">
            <div className="flex w-[1470px] flex-col overflow-hidden bg-[#efefef] pl-8 pr-8">
              <div className="flex h-[50px] shrink-0 items-center pb-[6px] pr-4 text-[14px] text-[#5a6270]">
                实时大盘
                <span className="ml-3 text-[#d5d8dc]">/</span>
                <span className="ml-[11px] font-medium text-[#464c5b]">资源加载异常</span>
                <Triangle className="ml-[9px] -mt-[1px] h-[7px] w-3 text-[#464c5b]" />
                <span className="ml-auto mt-[13px] text-[13px] text-[#3f95f2]">帮助文档</span>
              </div>
              <Summary />
              <ChartCard />
              <div className="mt-5 flex h-8 shrink-0 items-center text-[12px] text-[#495060]">
                <span className="ml-1 w-[39px] whitespace-nowrap pb-[1px] tracking-[-0.500px]">时间：</span>
                <div className="flex h-8 w-[180px] items-center justify-between rounded border border-[#dcdee2] bg-white pl-[7px] pr-[8px]">
                  <span className="pt-px tracking-[0.300px]">2019-11-28</span>
                  <CalendarIcon />
                </div>
                <div className="ml-1 flex h-8 w-20 items-center justify-center rounded border border-[#dcdee2] bg-[#f7f7f7] pt-px text-[#5f6672]">回到今日</div>
              </div>
              <TableCard />
            </div>
            <div className="w-2 bg-[#f9f9f9]">
              <div className="h-[292px] rounded-b bg-[#c6c9ce]" />
            </div>
          </div>
        </div>
      </div>
      <Support />
    </div>
  );
}
